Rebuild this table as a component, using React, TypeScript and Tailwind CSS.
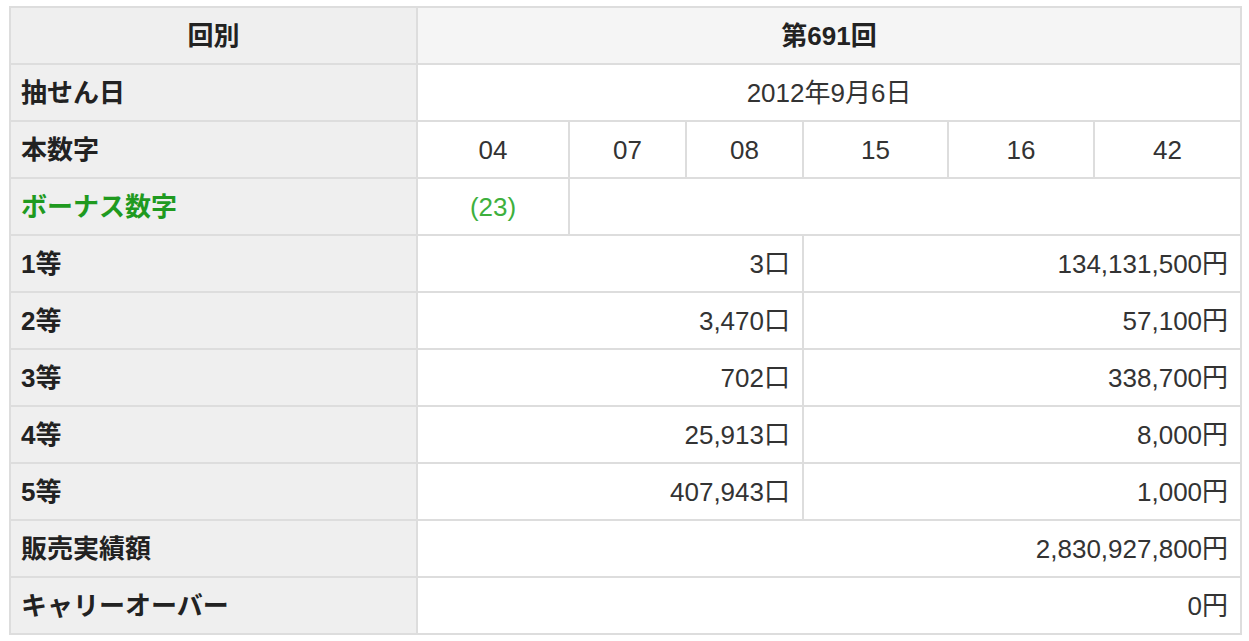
const numbers = ["04", "07", "08", "15", "16", "42"];

const prizes = [
  { rank: "1等", count: "3口", amount: "134,131,500円" },
  { rank: "2等", count: "3,470口", amount: "57,100円" },
  { rank: "3等", count: "702口", amount: "338,700円" },
  { rank: "4等", count: "25,913口", amount: "8,000円" },
  { rank: "5等", count: "407,943口", amount: "1,000円" },
];

const label = "border-2 border-[#dddddd] bg-[#efefef] px-[10px] text-left font-bold text-[#222]";
const cell = "border-2 border-[#dddddd] bg-white px-[12px] text-[#333]";

export default function App() {
  return (
    <div className="bg-white pt-[6px] pl-[9px]" style={{ fontFamily: '"Liberation Sans", "Noto Sans CJK JP", sans-serif' }}>
      <table className="w-[1231px] table-fixed border-collapse text-[26px] leading-none">
        <colgroup>
          <col className="w-[407px]" />
          <col className="w-[152px]" />
          <col className="w-[117px]" />
          <col className="w-[117px]" />
          <col className="w-[145px]" />
          <col className="w-[146px]" />
          <col className="w-[147px]" />
        </colgroup>
        <tbody>
          <tr className="h-[57px]">
            <th className={`${label} !text-center`}>回別</th>
            <th colSpan={6} className="border-2 border-[#dddddd] bg-[#f5f5f5] text-center font-bold text-[#222]">
              第691回
            </th>
          </tr>
          <tr className="h-[57px]">
            <th className={label}>抽せん日</th>
            <td colSpan={6} className={`${cell} text-center`}>2012年9月6日</td>
          </tr>
          <tr className="h-[57px]">
            <th className={label}>本数字</th>
            {numbers.map((n) => (
              <td key={n} className={`${cell} text-center`}>{n}</td>
            ))}
          </tr>
          <tr className="h-[57px]">
            <th className={`${label} !text-[#1f9a1f]`}>ボーナス数字</th>
            <td className={`${cell} text-center !text-[#3db03d]`}>(23)</td>
            <td colSpan={5} className={cell}></td>
          </tr>
          {prizes.map((p) => (
            <tr key={p.rank} className="h-[57px]">
              <th className={label}>{p.rank}</th>
              <td colSpan={3} className={`${cell} text-right`}>{p.count}</td>
              <td colSpan={3} className={`${cell} text-right`}>{p.amount}</td>
            </tr>
          ))}
          <tr className="h-[57px]">
            <th className={label}>販売実績額</th>
            <td colSpan={6} className={`${cell} text-right`}>2,830,927,800円</td>
          </tr>
          <tr className="h-[57px]">
            <th className={label}>キャリーオーバー</th>
            <td colSpan={6} className={`${cell} text-right`}>0円</td>
          </tr>
        </tbody>
      </table>
    </div>
  );
}
